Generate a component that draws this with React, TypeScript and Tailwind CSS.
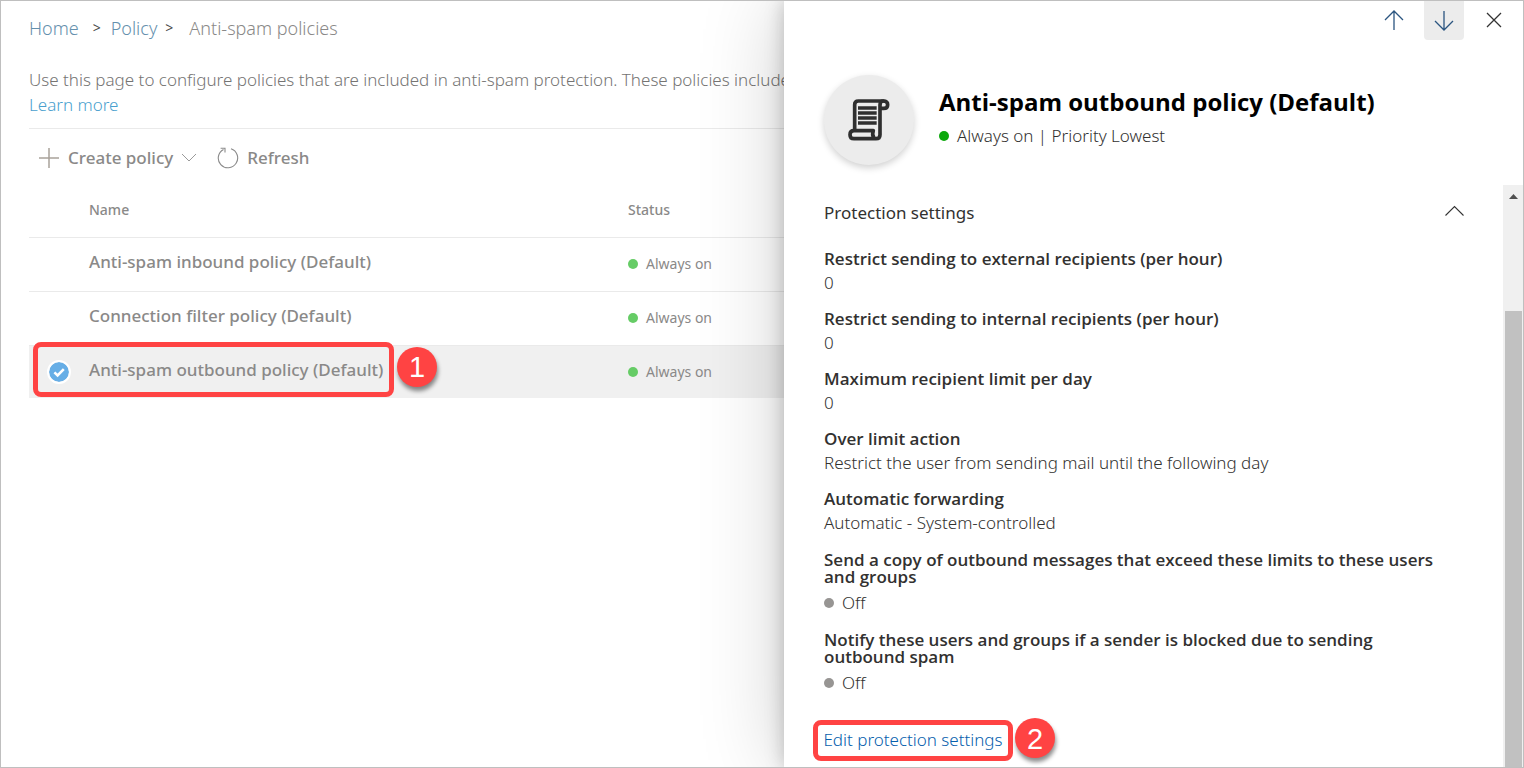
import React from "react";

type Policy = { name: string; selected?: boolean };

const policies: Policy[] = [
  { name: "Anti-spam inbound policy (Default)" },
  { name: "Connection filter policy (Default)" },
  { name: "Anti-spam outbound policy (Default)", selected: true },
];

type Setting = { title: string; value: string; dot?: boolean };

const settings: Setting[] = [
  { title: "Restrict sending to external recipients (per hour)", value: "0" },
  { title: "Restrict sending to internal recipients (per hour)", value: "0" },
  { title: "Maximum recipient limit per day", value: "0" },
  { title: "Over limit action", value: "Restrict the user from sending mail until the following day" },
  { title: "Automatic forwarding", value: "Automatic - System-controlled" },
  {
    title: "Send a copy of outbound messages that exceed these limits to these users and groups",
    value: "Off",
    dot: true,
  },
  {
    title: "Notify these users and groups if a sender is blocked due to sending outbound spam",
    value: "Off",
    dot: true,
  },
];

function Step({ n, className }: { n: number; className: string }) {
  return (
    <span
      className={`absolute flex size-10 items-center justify-center rounded-full bg-[#ff4343] pt-0.5 font-['Liberation_Sans',sans-serif] text-[29px] leading-none font-normal text-white shadow-[1px_4px_4px_rgba(0,0,0,0.45)] ${className}`}
    >
      {n}
    </span>
  );
}

function ScrollIcon() {
  return (
    <svg viewBox="0 0 126 126" className="size-[42px]" fill="none" stroke="#2f2f2f" strokeWidth="11" strokeLinejoin="round" strokeLinecap="round" aria-hidden="true">
      <path d="M20 92V17Q20 6 31 6H106Q119 6 119 17T107 28H99" />
      <path d="M106 6Q96 6 96 18V107Q96 119 84 119H18Q6 119 6 107T18 95H76Q71 107 78 117" />
      <path d="M30 27H86M30 42H86M30 57H86M30 72H86" strokeWidth="10" strokeLinecap="butt" />
    </svg>
  );
}

export default function App() {
  return (
    <div className="flex min-h-screen overflow-hidden border border-[#bfbfbf] bg-white font-['Noto_Sans','Open_Sans',sans-serif] text-[#323130]">
      <main className="min-w-0 flex-1 pl-7 text-[#8a8988]">
        <nav aria-label="Breadcrumb" className="flex h-[54px] items-center text-lg font-light whitespace-nowrap">
          <a href="#home" className="text-[#6590ad]">Home</a>
          <span className="ml-3.5 text-sm font-normal text-[#4a4a4a]">&gt;</span>
          <a href="#policy" className="ml-2.5 text-[#6590ad]">Policy</a>
          <span className="ml-2 text-sm font-normal text-[#4a4a4a]">&gt;</span>
          <span className="ml-4">Anti-spam policies</span>
        </nav>
        <p className="mt-3 text-[17px] leading-[25px] font-light whitespace-nowrap text-[#757473]">
          Use this page to configure policies that are included in anti-spam protection. These policies include
          <br />
          <a href="#learn" className="text-[#4a9fce]">Learn more</a>
        </p>
        <div className="mt-[11px] flex h-14 items-center border-t border-[#eaeaea] pt-0.5 pl-[9px] text-[17px] font-medium">
          <button type="button" className="flex items-center">
            <svg viewBox="0 0 22 22" className="size-[22px]" stroke="#a9a29b" strokeWidth="1.5" aria-hidden="true">
              <path d="M11 1V21M1 11H21" />
            </svg>
            <span className="ml-2">Create policy</span>
            <svg viewBox="0 0 16 16" className="ml-2 size-4" fill="none" stroke="#9a9a9a" aria-hidden="true">
              <path d="M1 4L8 11L15 4" />
            </svg>
          </button>
          <button type="button" className="ml-5 flex items-center">
            <svg viewBox="0 0 22 22" className="size-[22px]" fill="none" stroke="#8a8a8a" strokeWidth="1.1" aria-hidden="true">
              <path d="M14 1.8A9.7 9.7 0 1 1 6.5 2.4M3.6 1.2H8V5.6" />
            </svg>
            <span className="ml-2">Refresh</span>
          </button>
        </div>
        <table className="w-full table-fixed border-collapse text-left">
          <thead>
            <tr className="h-[53px] border-b border-[#eaeaea] text-sm">
              <th className="w-[60px]" aria-label="Select" />
              <th className="w-[539px] font-medium">Name</th>
              <th className="font-medium">Status</th>
            </tr>
          </thead>
          <tbody>
            {policies.map((p) => (
              <tr key={p.name} className={p.selected ? "h-[53px] bg-[#f0f0f0]" : "h-[54px] border-b border-[#eaeaea]"}>
                <td className="relative">
                  {p.selected && (
                    <>
                      <label className="relative ml-5 flex size-5 items-center justify-center">
                        <input
                          type="checkbox"
                          defaultChecked
                          aria-label={p.name}
                          className="absolute inset-0 appearance-none rounded-full bg-[#67aee6] outline-2 outline-white"
                        />
                        <svg viewBox="0 0 20 20" className="relative size-5" fill="none" stroke="white" strokeWidth="2.6" aria-hidden="true">
                          <path d="M5.4 10.4L8.6 13.4L14.8 7.2" />
                        </svg>
                      </label>
                      <span className="pointer-events-none absolute -top-1 left-1 h-[55px] w-[361px] rounded-lg border-5 border-[#ff4343]" />
                      <Step n={1} className="top-px left-[368px]" />
                    </>
                  )}
                </td>
                <td className="pb-1 text-[17px] font-medium">{p.name}</td>
                <td className="text-sm">
                  <span className="flex items-center gap-2">
                    <span className="size-2.5 rounded-full bg-[#66cc66]" />
                    Always on
                  </span>
                </td>
              </tr>
            ))}
          </tbody>
        </table>
      </main>

      <aside className="relative flex w-[739px] max-w-full shrink-0 flex-col bg-white shadow-[0_0_80px_rgba(0,0,0,0.2),0_0_18px_rgba(0,0,0,0.22)]">
        <div className="flex h-[39px] items-start justify-end gap-2.5 pr-[9px]">
          <button type="button" aria-label="Previous" className="flex h-[38px] w-10 items-center justify-center">
            <svg viewBox="0 0 20 20" className="size-5" fill="none" stroke="#2b5580" strokeWidth="1.3" aria-hidden="true">
              <path d="M10 20V1M1 10L10 1L19 10" />
            </svg>
          </button>
          <button type="button" aria-label="Next" className="flex h-[39px] w-10 items-center justify-center rounded-b-sm bg-[#ececec]">
            <svg viewBox="0 0 20 20" className="size-5" fill="none" stroke="#2b5580" strokeWidth="1.3" aria-hidden="true">
              <path d="M10 0V19M1 10L10 19L19 10" />
            </svg>
          </button>
          <button type="button" aria-label="Close" className="flex h-[38px] w-10 items-center justify-center">
            <svg viewBox="0 0 16 16" className="size-4" fill="none" stroke="#333" strokeWidth="1.3" aria-hidden="true">
              <path d="M1 1L15 15M15 1L1 15" />
            </svg>
          </button>
        </div>
        <header className="flex h-[145px] gap-[25px] pt-[35px] pl-10">
          <div className="flex size-[90px] items-center justify-center rounded-full bg-[#ececec] shadow-[0_3px_7px_rgba(0,0,0,0.18)]">
            <ScrollIcon />
          </div>
          <div className="pt-[9px]">
            <h1 className="font-['Open_Sans','Noto_Sans',sans-serif] text-2xl leading-9 font-bold text-black">
              Anti-spam outbound policy (Default)
            </h1>
            <p className="flex items-center gap-2 text-[17px] leading-8 font-light">
              <span className="size-2.5 rounded-full bg-[#0ba80b]" />
              Always on | Priority Lowest
            </p>
          </div>
        </header>
        <div className="flex flex-1">
          <section className="flex-1 pr-[39px] pl-10">
            <h2>
              <button type="button" aria-expanded="true" className="flex h-14 w-full items-center justify-between text-[17px] font-normal">
                Protection settings
                <svg viewBox="0 0 20 12" className="mb-1 h-3 w-5" fill="none" stroke="#333" strokeWidth="1.1" aria-hidden="true">
                  <path d="M1.5 10.5L10.5 1.5L19.5 10.5" />
                </svg>
              </button>
            </h2>
            <dl className="mt-[9px] flex flex-col gap-[15px] pr-6">
              {settings.map((s) => (
                <div key={s.title} className={s.dot ? "pt-px" : ""}>
                  <dt className="font-['Open_Sans','Noto_Sans',sans-serif] text-[17px] leading-[17px] font-semibold">{s.title}</dt>
                  <dd className={`${s.dot ? "mt-1.5" : "mt-1"} flex items-center gap-2 text-[17px] leading-6 font-light`}>
                    {s.dot && <span className="size-2.5 rounded-full bg-[#979593]" />}
                    {s.value}
                  </dd>
                </div>
              ))}
            </dl>
            <div className="relative mt-[25px] -ml-[11px] flex w-[200px]">
              <a
                href="#edit"
                className="flex h-[41px] w-[200px] items-center justify-center rounded-lg border-5 border-[#ff4343] pb-0.5 text-[17px] font-light whitespace-nowrap text-[#0660ad]"
              >
                Edit protection settings
              </a>
              <Step n={2} className="-top-0.5 left-[202px]" />
            </div>
          </section>
          <div className="flex w-5 flex-col bg-[#f0f0f0]">
            <svg viewBox="0 0 20 126" className="h-[126px] w-5" aria-hidden="true">
              <path d="M10.5 9L15 14H6Z" fill="#505050" />
            </svg>
            <div className="mr-px ml-0.5 flex-1 bg-[#c1c1c1]" />
          </div>
        </div>
      </aside>
    </div>
  );
}
